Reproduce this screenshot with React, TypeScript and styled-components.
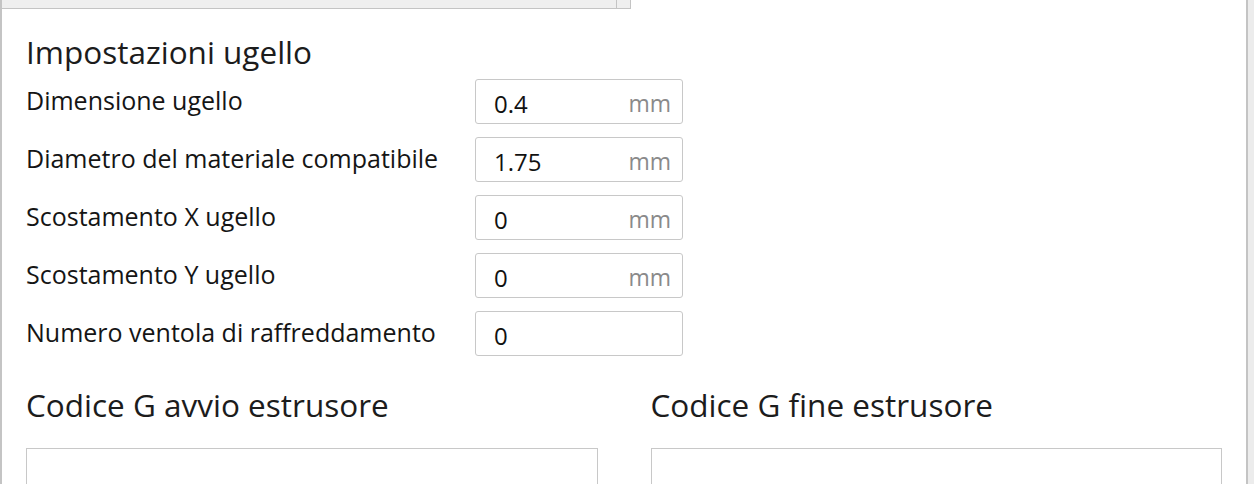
import React from "react";
import styled, { createGlobalStyle } from "styled-components";

type NozzleField = {
  label: string;
  value: string;
  unit?: string;
};

const NOZZLE_FIELDS: NozzleField[] = [
  { label: "Dimensione ugello", value: "0.4", unit: "mm" },
  { label: "Diametro del materiale compatibile", value: "1.75", unit: "mm" },
  { label: "Scostamento X ugello", value: "0", unit: "mm" },
  { label: "Scostamento Y ugello", value: "0", unit: "mm" },
  { label: "Numero ventola di raffreddamento", value: "0" },
];

const App: React.FC = () => {
  return (
    <>
      <GlobalStyle />
      <Page>
        <Panel>
          <TopStrip>
            <ScrollTrack />
          </TopStrip>

          <Content>
            <SectionTitle>Impostazioni ugello</SectionTitle>

            <FieldList>
              {NOZZLE_FIELDS.map((field) => (
                <FieldRow key={field.label}>
                  <FieldLabel>{field.label}</FieldLabel>
                  <InputBox>
                    <InputValue>{field.value}</InputValue>
                    {field.unit && <InputUnit>{field.unit}</InputUnit>}
                  </InputBox>
                </FieldRow>
              ))}
            </FieldList>

            <GcodeGrid>
              <GcodeColumn>
                <SectionTitle>Codice G avvio estrusore</SectionTitle>
                <GcodeArea />
              </GcodeColumn>
              <GcodeColumn>
                <SectionTitle>Codice G fine estrusore</SectionTitle>
                <GcodeArea />
              </GcodeColumn>
            </GcodeGrid>
          </Content>
        </Panel>
      </Page>
    </>
  );
};

export default App;

/* ------------------- styled-components ------------------- */

const GlobalStyle = createGlobalStyle`
  html, body {
    margin: 0;
    padding: 0;
    background: #ececec;
  }

  body {
    font-family: "Open Sans", "Noto Sans", sans-serif;
    -webkit-font-smoothing: antialiased;
  }
`;

const Page = styled.div`
  display: flex;
  width: 1254px;
  height: 484px;
  overflow: hidden;
  background: #ececec;
`;

const Panel = styled.div`
  width: 1248px;
  height: 100%;
  box-sizing: border-box;
  background: #ffffff;
  border-left: 2px solid #c4c4c4;
  border-right: 2px solid #c4c4c4;
  display: flex;
  flex-direction: column;
`;

const TopStrip = styled.div`
  width: 629px;
  height: 9px;
  flex-shrink: 0;
  box-sizing: border-box;
  background: #efefef;
  border-bottom: 1px solid #c4c4c4;
  border-right: 1px solid #c4c4c4;
  display: flex;
  justify-content: flex-end;
`;

const ScrollTrack = styled.div`
  width: 13px;
  height: 100%;
  border-left: 1px solid #c4c4c4;
`;

const Content = styled.div`
  padding: 26px 24px 0;
  display: flex;
  flex-direction: column;
`;

const SectionTitle = styled.h2`
  margin: 0;
  font-size: 31.5px;
  line-height: 34px;
  font-weight: 400;
  color: #1c1c1c;
`;

const FieldList = styled.div`
  margin-top: 10px;
  display: flex;
  flex-direction: column;
  gap: 13px;
`;

const FieldRow = styled.div`
  display: grid;
  grid-template-columns: 449px 208px;
  align-items: center;
  height: 45px;
`;

const FieldLabel = styled.span`
  font-size: 25px;
  line-height: 30px;
  padding-bottom: 3px;
  color: #151515;
  white-space: nowrap;
`;

const InputBox = styled.div`
  height: 45px;
  box-sizing: border-box;
  border: 1px solid #c8c8c8;
  border-radius: 3px;
  display: flex;
  align-items: center;
  padding: 3px 11px 0 18px;
`;

const InputValue = styled.span`
  flex: 1;
  font-size: 24px;
  color: #111111;
`;

const InputUnit = styled.span`
  font-size: 23px;
  color: #8a8a8a;
`;

const GcodeGrid = styled.div`
  margin-top: 32px;
  display: grid;
  grid-template-columns: 1fr 1fr;
  column-gap: 53px;
`;

const GcodeColumn = styled.div`
  display: flex;
  flex-direction: column;
`;

const GcodeArea = styled.div`
  margin-top: 26px;
  height: 120px;
  border: 1px solid #c8c8c8;
  background: #ffffff;
`;
